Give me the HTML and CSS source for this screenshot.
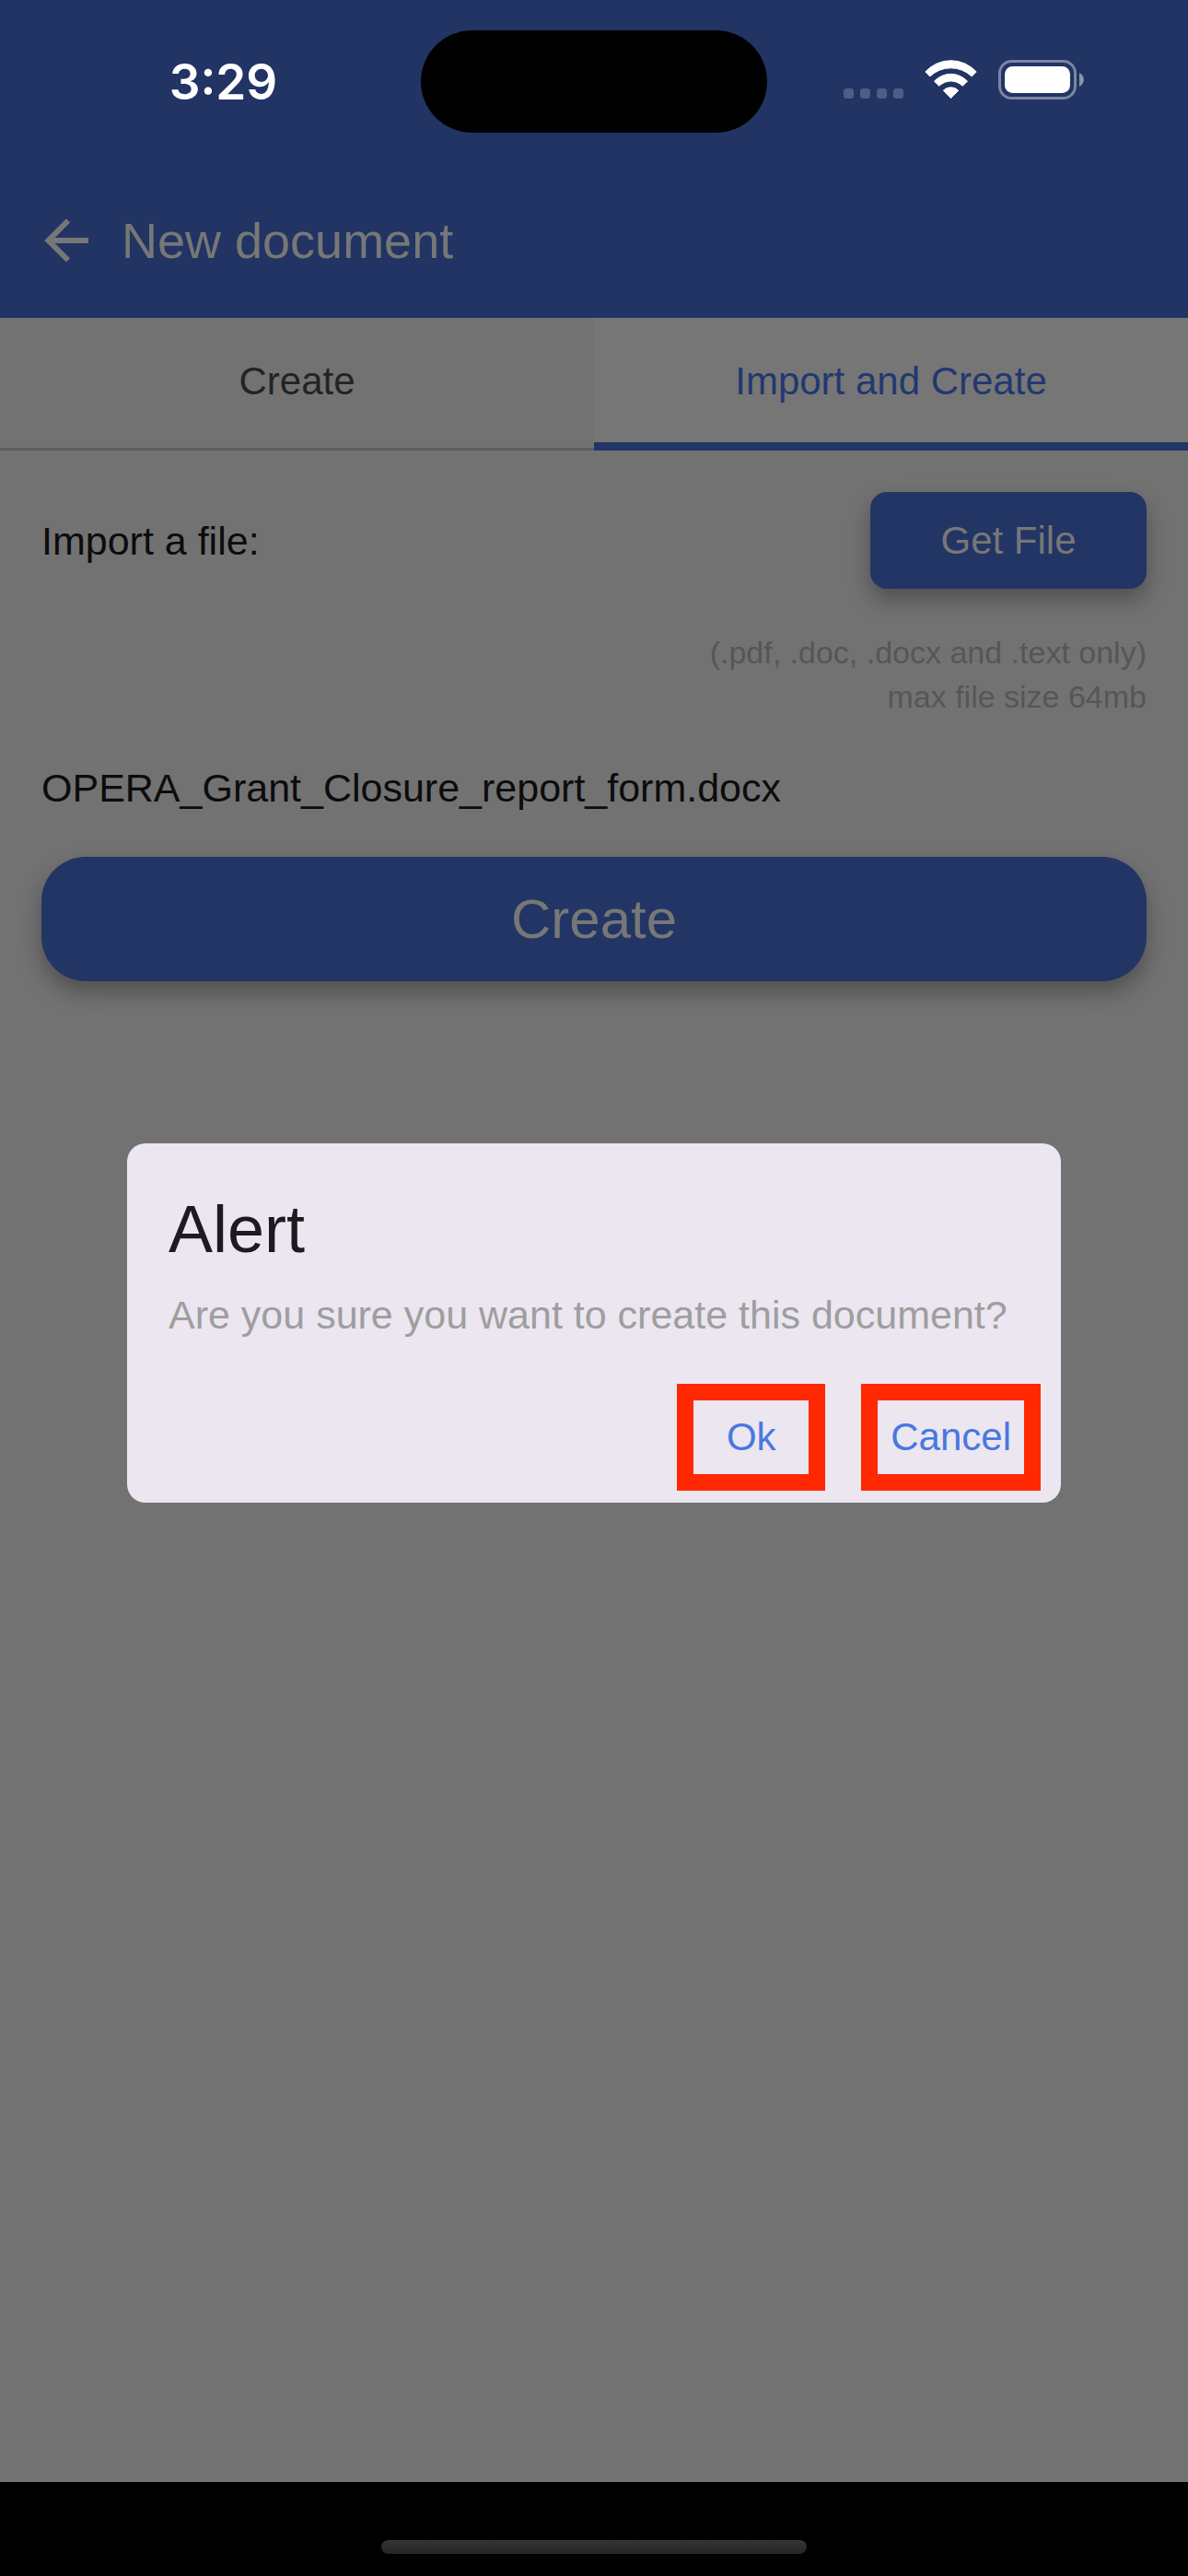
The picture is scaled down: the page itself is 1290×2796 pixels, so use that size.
FILE: index.html
```html
<!DOCTYPE html>
<html lang="en">
<head>
    <meta charset="UTF-8" />
    <meta name="viewport" content="width=device-width, initial-scale=1" />
    <title>New document</title>
    <link rel="stylesheet" href="styles.css">
</head>
<body>
    <div class="status-bar">
        <div class="status-time">3:29</div>
        <div class="island"></div>
        <div class="status-icons">
            <svg width="65" height="43" viewBox="0 0 65 43" fill="#4f5d86">
                <rect x="0" y="31" width="11" height="11" rx="3.5" />
                <rect x="18" y="31" width="11" height="11" rx="3.5" />
                <rect x="36" y="31" width="11" height="11" rx="3.5" />
                <rect x="54" y="31" width="11" height="11" rx="3.5" />
            </svg>
            <svg width="57" height="43" viewBox="0 0 57 43" fill="#fff" stroke="#fff" stroke-width="1" stroke-linejoin="round">
                <path d="M.8 12.9A37.6 37.6 0 0 1 56.2 12.9L51.2 18A32.6 32.6 0 0 0 5.8 18Z" />
                <path d="M10.5 23.2A24.5 24.5 0 0 1 46.5 23.2L41.2 28.3A18 18 0 0 0 15.8 28.3Z" />
                <path d="M20.3 33.2A11.5 11.5 0 0 1 36.7 33.2L28.5 41.6Z" />
            </svg>
            <svg width="93" height="43" viewBox="0 0 93 43">
                <rect x="1.5" y="1.5" width="82" height="40" rx="13" fill="none" stroke="#7b86a3" stroke-width="3" />
                <rect x="7" y="7" width="71" height="29" rx="8.5" fill="#fff" />
                <path d="M88 14C94.5 17 94.5 26 88 29Z" fill="#8b94ae" />
            </svg>
        </div>
    </div>

    <header class="app-bar">
        <button class="back-btn" aria-label="Back">
            <svg width="48" height="48" viewBox="0 0 48 48" fill="none" stroke="#777" stroke-width="6">
                <path d="M48 24H5M26 2.5L4.5 24L26 45.5" />
            </svg>
        </button>
        <h1>New document</h1>
    </header>

    <nav class="tabs">
        <button class="tab">Create</button>
        <button class="tab active">Import and Create</button>
    </nav>

    <main>
        <div class="import-row">
            <span>Import a file:</span>
            <button class="btn get-file">Get File</button>
        </div>
        <p class="hint">(.pdf, .doc, .docx and .text only)<br>max file size 64mb</p>
        <p class="file-name">OPERA_Grant_Closure_report_form.docx</p>
        <button class="btn create">Create</button>
    </main>

    <div class="home-bar">
        <div class="home-indicator"></div>
    </div>

    <div class="overlay">
        <div class="dialog" role="alertdialog" aria-labelledby="alertTitle" aria-describedby="alertText">
            <h2 id="alertTitle">Alert</h2>
            <p id="alertText">Are you sure you want to create this document?</p>
            <div class="dialog-actions">
                <button>Ok</button>
                <button>Cancel</button>
            </div>
        </div>
    </div>
</body>
</html>
```

FILE: styles.css
```css
/* Reset and base */
* {
    box-sizing: border-box;
}
body {
    margin: 0;
    min-height: 100vh;
    display: flex;
    flex-direction: column;
    font-family: "Liberation Sans", Arial, sans-serif;
    font-size: 43px;
    line-height: 60px;
    color: #0c0c0c;
    background: #727272;
}
h1, h2, p {
    margin: 0;
    font-weight: 400;
}
button {
    border: none;
    padding: 0;
    font-family: inherit;
    font-size: 42px;
    line-height: 60px;
    background: none;
    cursor: pointer;
}
svg {
    display: block;
}

/* Phone status bar */
.status-bar {
    height: 177px;
    display: grid;
    grid-template-columns: 1fr 376px 1fr;
    align-items: center;
    background: #213463;
}
.status-time {
    padding-left: 28px;
    text-align: center;
    font-family: Inter, sans-serif;
    font-size: 53px;
    font-weight: 600;
    color: #fff;
}
.island {
    height: 111px;
    border-radius: 56px;
    background: #000;
}
.status-icons {
    display: flex;
    justify-content: center;
    gap: 23px;
    padding: 0 30px 4px 0;
}

/* App bar */
.app-bar {
    height: 168px;
    padding: 0 48px;
    display: flex;
    align-items: center;
    gap: 36px;
    background: #213463;
    color: #777;
}
.app-bar h1 {
    font-size: 54px;
}

/* Tabs */
.tabs {
    display: flex;
    height: 144px;
}
.tab {
    flex: 1;
    padding-bottom: 6px;
    color: #232327;
    box-shadow: inset 0 -3px #5f5c64;
}
.tab.active {
    color: #22386f;
    background: #767676;
    box-shadow: inset 0 -9px #213567;
}

/* Import form */
main {
    flex: 1;
    display: flex;
    flex-direction: column;
    gap: 45px;
    padding: 45px;
}
.import-row {
    display: flex;
    align-items: center;
    justify-content: space-between;
}
.btn {
    background: #223565;
    color: #777;
    box-shadow: 0 12px 24px rgba(0, 0, 0, 0.3);
}
.get-file {
    width: 300px;
    height: 105px;
    border-radius: 18px;
}
.create {
    height: 135px;
    border-radius: 48px;
    font-size: 60px;
}
.hint {
    font-size: 34px;
    line-height: 48px;
    text-align: right;
    color: #565656;
}

/* Home indicator */
.home-bar {
    height: 102px;
    padding-bottom: 24px;
    display: flex;
    align-items: flex-end;
    justify-content: center;
    background: #000;
}
.home-indicator {
    width: 462px;
    height: 15px;
    border-radius: 8px;
    background: linear-gradient(#353535, #252525);
}

/* Alert dialog, centred between the status bar and the home bar */
.overlay {
    position: fixed;
    top: 177px;
    right: 0;
    bottom: 102px;
    left: 0;
    padding: 0 138px;
    display: flex;
    align-items: center;
}
.dialog {
    flex: 1;
    padding: 45px 22px 13px 45px;
    border-radius: 20px;
    background: #ebe6f0;
}
.dialog h2 {
    margin-bottom: 15px;
    font-size: 72px;
    line-height: 96px;
    color: #1d1b20;
}
.dialog p {
    color: #9e9e9e;
}
.dialog-actions {
    display: flex;
    justify-content: flex-end;
    gap: 39px;
    margin-top: 45px;
}
.dialog-actions button {
    min-width: 161px;
    height: 116px;
    padding: 0 14px;
    border: 18px solid #ff2800;
    color: #4878e0;
}
```
